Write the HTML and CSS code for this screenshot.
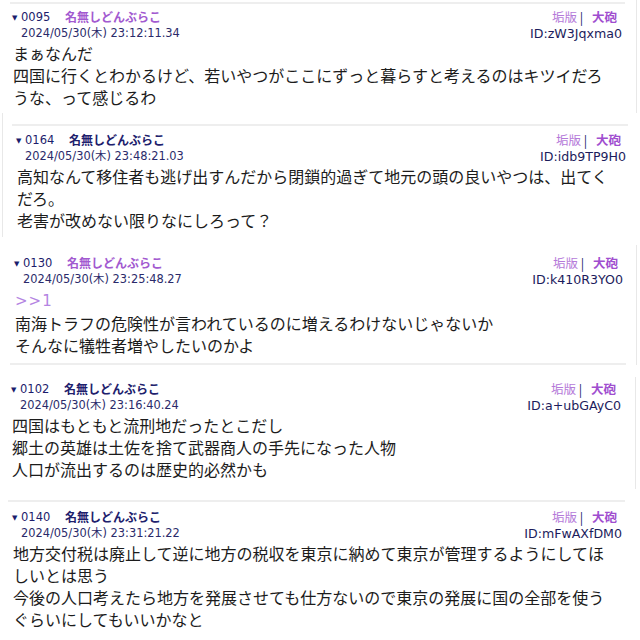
FILE: index.html
```html
<!DOCTYPE html>
<html lang="ja">
<head>
    <meta charset="UTF-8">
    <meta name="viewport" content="width=device-width, initial-scale=1.0">
    <title>名無しどんぶらこ - レス</title>
    <link rel="stylesheet" href="styles.css">
</head>
<body>
    <div class="shot shot-a">
        <article class="post">
            <div class="post-head">
                <span class="num"><span class="arrow">▼</span> 0095</span>
                <span class="name name-purple">名無しどんぶらこ</span>
                <span class="links"><span class="link-ban">垢版</span> | <span class="link-gun">大砲</span></span>
            </div>
            <div class="post-meta">
                <span class="date">2024/05/30(木) 23:12:11.34</span>
                <span class="uid">ID:zW3Jqxma0</span>
            </div>
            <div class="post-body">まぁなんだ<br>四国に行くとわかるけど、若いやつがここにずっと暮らすと考えるのはキツイだろうな、って感じるわ</div>
        </article>
    </div>

    <div class="shot shot-b">
        <article class="post">
            <div class="post-head">
                <span class="num"><span class="arrow">▼</span> 0164</span>
                <span class="name">名無しどんぶらこ</span>
                <span class="links"><span class="link-ban">垢版</span> | <span class="link-gun">大砲</span></span>
            </div>
            <div class="post-meta">
                <span class="date">2024/05/30(木) 23:48:21.03</span>
                <span class="uid">ID:idb9TP9H0</span>
            </div>
            <div class="post-body">高知なんて移住者も逃げ出すんだから閉鎖的過ぎて地元の頭の良いやつは、出てくだろ。<br>老害が改めない限りなにしろって？</div>
        </article>
    </div>

    <div class="shot shot-c">
        <article class="post">
            <div class="post-head">
                <span class="num"><span class="arrow">▼</span> 0130</span>
                <span class="name name-purple">名無しどんぶらこ</span>
                <span class="links"><span class="link-ban">垢版</span> | <span class="link-gun">大砲</span></span>
            </div>
            <div class="post-meta">
                <span class="date">2024/05/30(木) 23:25:48.27</span>
                <span class="uid">ID:k410R3YO0</span>
            </div>
            <div class="post-body"><span class="anchor">&gt;&gt;1</span><br>南海トラフの危険性が言われているのに増えるわけないじゃないか<br>そんなに犠牲者増やしたいのかよ</div>
        </article>
    </div>

    <div class="shot shot-d">
        <article class="post">
            <div class="post-head">
                <span class="num"><span class="arrow">▼</span> 0102</span>
                <span class="name">名無しどんぶらこ</span>
                <span class="links"><span class="link-ban">垢版</span> | <span class="link-gun">大砲</span></span>
            </div>
            <div class="post-meta">
                <span class="date">2024/05/30(木) 23:16:40.24</span>
                <span class="uid">ID:a+ubGAyC0</span>
            </div>
            <div class="post-body">四国はもともと流刑地だったとこだし<br>郷土の英雄は土佐を捨て武器商人の手先になった人物<br>人口が流出するのは歴史的必然かも</div>
        </article>
    </div>

    <div class="shot shot-e">
        <article class="post">
            <div class="post-head">
                <span class="num"><span class="arrow">▼</span> 0140</span>
                <span class="name">名無しどんぶらこ</span>
                <span class="links"><span class="link-ban">垢版</span> | <span class="link-gun">大砲</span></span>
            </div>
            <div class="post-meta">
                <span class="date">2024/05/30(木) 23:31:21.22</span>
                <span class="uid">ID:mFwAXfDM0</span>
            </div>
            <div class="post-body">地方交付税は廃止して逆に地方の税収を東京に納めて東京が管理するようにしてほしいとは思う<br>今後の人口考えたら地方を発展させても仕方ないので東京の発展に国の全部を使うぐらいにしてもいいかなと</div>
        </article>
    </div>
</body>
</html>
```

FILE: styles.css
```css
body {
    margin: 0;
    background-color: white;
    font-family: "DejaVu Sans", "Noto Sans CJK JP", sans-serif;
    color: #1c1c1c;
    overflow: hidden;
}

/* each post is a cut-out screenshot, with its own frame line */
.shot {
    box-sizing: border-box;
}
.shot-a {
    width: 637px;
    padding: 2px 0 5px 0;
    border-right: 1px solid #e8e8e8;
}
.shot-b {
    margin-left: 2px;
    padding: 11px 0 6px 0;
    border-left: 1px solid #e8e8e8;
}
.shot-c {
    width: 637px;
    margin-top: 8px;
    padding: 2px 0 0 0;
    border-right: 1px solid #e8e8e8;
}
.shot-d {
    width: 636px;
    margin-top: 12px;
    padding: 0 0 9px 0;
    border-right: 1px solid #e8e8e8;
}
.shot-e {
    margin-top: 11px;
}

.post {
    border-top: 2px solid #eeeeee;
    padding: 5px 3px 0 2px;
}
.shot-a .post {
    margin: 0 11px 0 10px;
}
.shot-b .post {
    margin: 0 12px 0 9px;
    padding: 6px 2px 0 4px;
}
.shot-c .post {
    margin: 0 10px 0 10px;
    padding: 6px 3px 7px 4px;
    border-top-color: white;
    border-bottom: 2px solid #eeeeee;
}
.shot-d .post {
    margin: 0 10px 0 10px;
    padding: 4px 4px 0 1px;
    border-top: none;
}
.shot-e .post {
    margin: 0 15px 0 8px;
    padding: 7px 3px 0 4px;
}

.post-head {
    display: flex;
    align-items: center;
    height: 16px;
    font-size: 11.5px;
    line-height: 16px;
}
.num {
    color: #1c1c6c;
    width: 53px;
}
.arrow {
    font-size: 7px;
    vertical-align: 1px;
}
.name {
    font-family: "Noto Sans CJK JP", sans-serif;
    font-size: 12px;
    font-weight: bold;
    color: #20206c;
}
.name-purple {
    color: #a25ad0;
}
.links {
    margin-left: auto;
    padding-right: 5px;
    font-family: "Noto Sans CJK JP", sans-serif;
    font-size: 12.5px;
    color: #20206c;
    white-space: pre;
}
.link-ban {
    color: #b57ad9;
}
.link-gun {
    color: #a04ecf;
    font-weight: bold;
    margin-left: 6px;
}

.post-meta {
    display: flex;
    justify-content: space-between;
    align-items: center;
    height: 17px;
    line-height: 17px;
}
.date {
    padding-left: 9px;
    font-size: 11.4px;
    color: #2a2a6a;
}
.uid {
    font-size: 12.6px;
    color: #1c1c5c;
}

.post-body {
    width: 600px;
    padding-left: 1px;
    font-family: "Noto Sans CJK JP", sans-serif;
    font-size: 16px;
    line-height: 22px;
    color: #1c1c1c;
}
.anchor {
    color: #b484e2;
    letter-spacing: 1px;
    font-family: "DejaVu Sans", sans-serif;
    font-size: 15px;
}
```
